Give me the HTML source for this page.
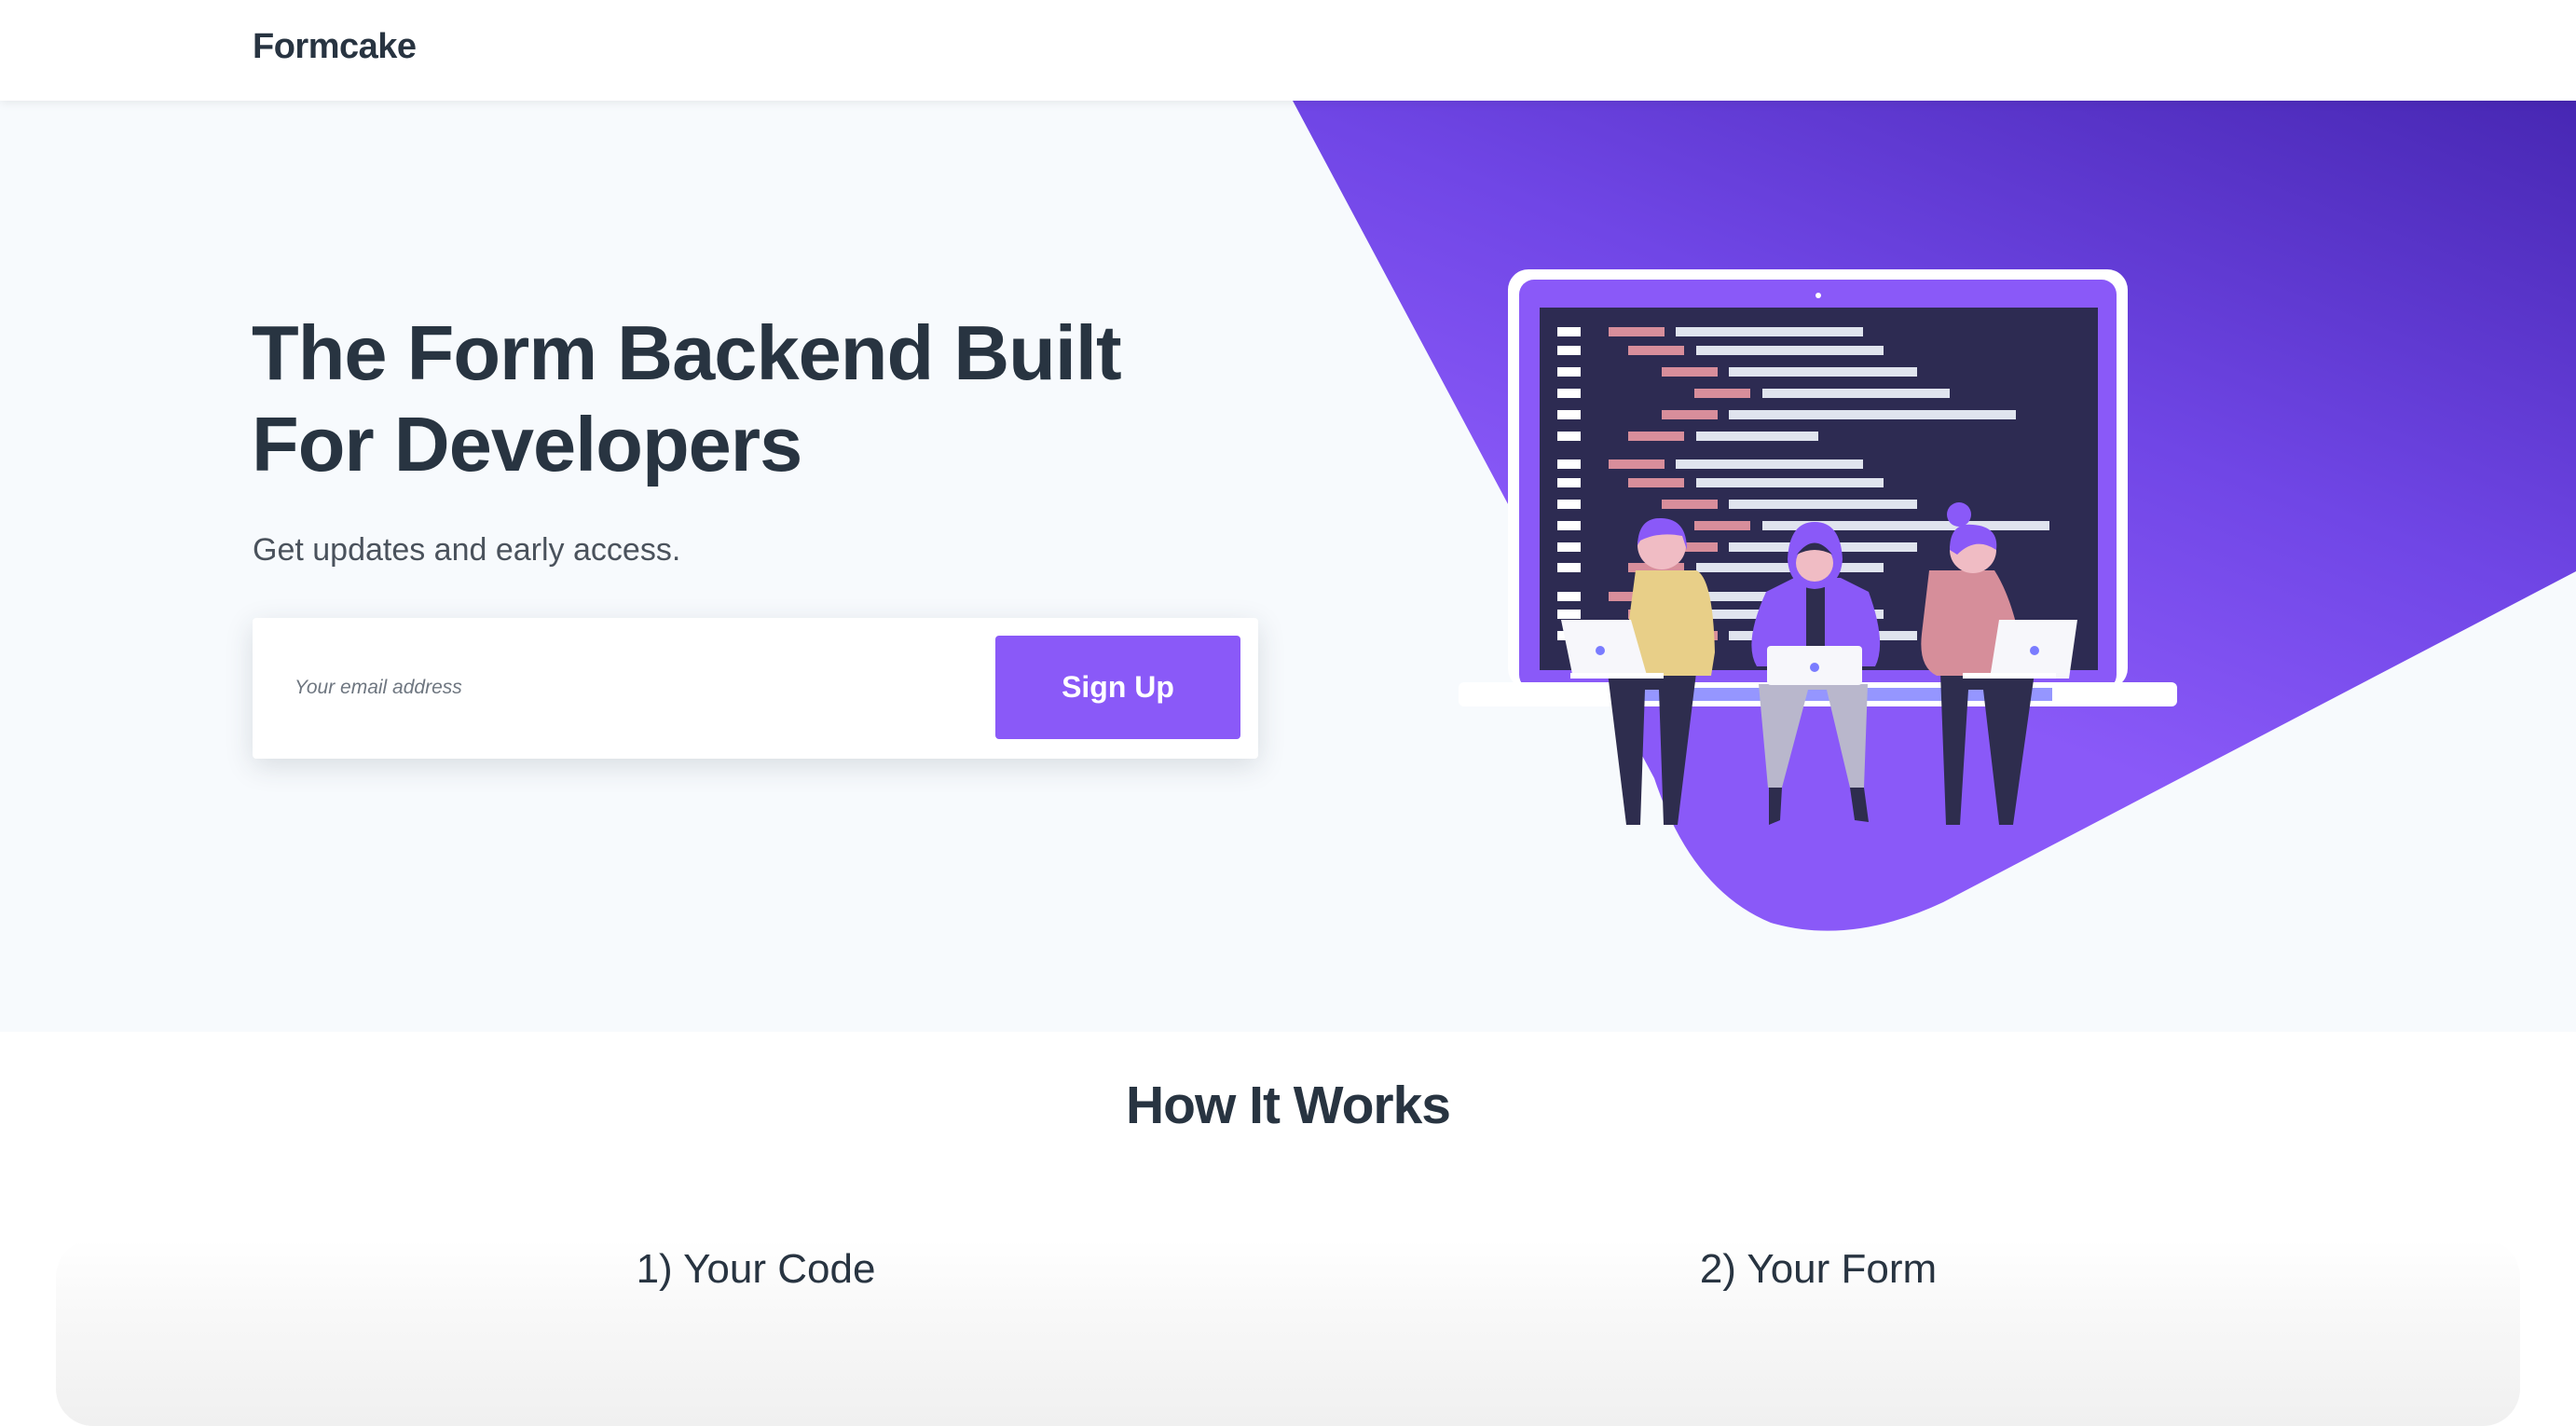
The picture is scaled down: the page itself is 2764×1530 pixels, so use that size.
<!DOCTYPE html>
<html><head><meta charset="utf-8"><style>
*{margin:0;padding:0;box-sizing:border-box}
html,body{width:2764px;height:1416px;overflow:hidden;background:#fff;font-family:"Liberation Sans",sans-serif;color:#283441}
.hero{position:absolute;left:0;top:0;width:2764px;height:1107px;background:#f7fafd;overflow:hidden}
header{position:absolute;left:0;top:0;width:2764px;height:108px;background:#fff;box-shadow:0 2px 10px rgba(0,0,0,.08);z-index:5}
.logo{position:absolute;left:271px;top:29px;font-size:38px;font-weight:bold;letter-spacing:-0.5px;color:#283441}
h1{position:absolute;left:270px;top:330px;font-size:83px;line-height:98px;font-weight:bold;letter-spacing:-1px;color:#283441;z-index:3}
.sub{position:absolute;left:271px;top:571px;font-size:34px;color:#4a525c;z-index:3}
.form{position:absolute;left:271px;top:663px;width:1079px;height:151px;background:#fff;border-radius:4px;box-shadow:0 8px 30px rgba(40,52,65,.15);z-index:3}
.ph{position:absolute;left:45px;top:63px;font-size:21px;font-style:italic;color:#6e7680}
.btn{position:absolute;left:797px;top:19px;width:263px;height:111px;background:#8a59f8;border-radius:4px;color:#fff;font-weight:bold;font-size:32px;text-align:center;line-height:111px}
svg.art{position:absolute;left:0;top:0}
.how{position:absolute;left:0;width:2764px;text-align:center;top:1153px;font-size:57px;font-weight:bold;color:#283441;letter-spacing:-1px}
.card{position:absolute;left:60px;top:1330px;width:2644px;height:200px;border-radius:40px;background:linear-gradient(rgba(255,255,255,0),#f8f8f8 40%,#f0f0f0)}
.step{position:absolute;top:1337px;font-size:44px;color:#283441;transform:translateX(-50%)}
</style></head><body>
<div class="hero">
<svg class="art" width="2764" height="1107" viewBox="0 0 2764 1107">
<defs><linearGradient id="g" x1="1" y1="0" x2="0.55" y2="0.75"><stop offset="0" stop-color="#4727b3"/><stop offset="0.6" stop-color="#7046e6"/><stop offset="1" stop-color="#8a59f8"/></linearGradient></defs>
<path d="M1387,108 L2764,108 L2764,613 L2085,968 Q1985,1015 1900,990 Q1815,955 1775,835 Z" fill="url(#g)"/>
<rect x="1618" y="289" width="665" height="450" rx="22" fill="#fff"/>
<rect x="1630" y="300" width="641" height="440" rx="16" fill="#8a59f8"/>
<rect x="1652" y="330" width="599" height="389" fill="#2d2b52"/>
<circle cx="1951" cy="317" r="3" fill="#fff"/>
<g fill="#fff">
<rect x="1671" y="351" width="25" height="10"/><rect x="1671" y="371" width="25" height="10"/><rect x="1671" y="394" width="25" height="10"/><rect x="1671" y="417" width="25" height="10"/><rect x="1671" y="440" width="25" height="10"/><rect x="1671" y="463" width="25" height="10"/><rect x="1671" y="493" width="25" height="10"/><rect x="1671" y="513" width="25" height="10"/><rect x="1671" y="536" width="25" height="10"/><rect x="1671" y="559" width="25" height="10"/><rect x="1671" y="582" width="25" height="10"/><rect x="1671" y="604" width="25" height="10"/><rect x="1671" y="635" width="25" height="10"/><rect x="1671" y="654" width="25" height="10"/><rect x="1671" y="677" width="25" height="10"/>
</g>
<g fill="#d88e9b">
<rect x="1726" y="351" width="60" height="10"/><rect x="1747" y="371" width="60" height="10"/><rect x="1783" y="394" width="60" height="10"/><rect x="1818" y="417" width="60" height="10"/><rect x="1783" y="440" width="60" height="10"/><rect x="1747" y="463" width="60" height="10"/><rect x="1726" y="493" width="60" height="10"/><rect x="1747" y="513" width="60" height="10"/><rect x="1783" y="536" width="60" height="10"/><rect x="1818" y="559" width="60" height="10"/><rect x="1783" y="582" width="60" height="10"/><rect x="1747" y="604" width="60" height="10"/><rect x="1726" y="635" width="60" height="10"/><rect x="1747" y="654" width="60" height="10"/><rect x="1783" y="677" width="60" height="10"/>
</g>
<g fill="#e0e4ee">
<rect x="1798" y="351" width="201" height="10"/><rect x="1820" y="371" width="201" height="10"/><rect x="1855" y="394" width="202" height="10"/><rect x="1891" y="417" width="201" height="10"/><rect x="1855" y="440" width="308" height="10"/><rect x="1820" y="463" width="131" height="10"/><rect x="1798" y="493" width="201" height="10"/><rect x="1820" y="513" width="201" height="10"/><rect x="1855" y="536" width="202" height="10"/><rect x="1891" y="559" width="308" height="10"/><rect x="1855" y="582" width="202" height="10"/><rect x="1820" y="604" width="201" height="10"/><rect x="1798" y="635" width="201" height="10"/><rect x="1820" y="654" width="201" height="10"/><rect x="1855" y="677" width="202" height="10"/>
</g>
<rect x="1565" y="732" width="771" height="26" rx="6" fill="#fff"/>
<rect x="1742" y="738" width="460" height="14" fill="#7a7cff" opacity=".8"/>
<path d="M1725,722 L1745,885 L1760,885 L1765,740 L1780,740 L1785,885 L1800,885 L1820,722 Z" fill="#2e2d4e"/>
<path d="M1755,612 L1820,612 Q1838,620 1840,700 L1836,725 L1740,725 Z" fill="#e8cf88"/>
<circle cx="1783" cy="585" r="26" fill="#f0bcc4"/>
<path d="M1757,585 Q1758,555 1783,556 Q1810,557 1810,590 L1805,575 Q1780,570 1760,580 Z" fill="#8a59f8"/>
<path d="M1675,665 L1750,665 L1768,728 L1688,728 Z" fill="#f7f7fb"/>
<rect x="1685" y="722" width="100" height="6" fill="#fff"/>
<circle cx="1717" cy="698" r="5" fill="#7a7cff"/>
<path d="M1887,734 L1897,845 L1912,845 L1940,740 L1960,740 L1985,845 L2000,845 L2004,734 Z" fill="#b9b7cc"/>
<path d="M1898,845 L1912,845 L1910,880 L1898,885 Z M1985,845 L2000,845 L2005,882 L1990,880 Z" fill="#2e2d4e"/>
<path d="M1885,715 Q1870,690 1895,635 L1925,620 L1975,620 L2005,635 Q2025,690 2012,715 Z" fill="#8a59f8"/>
<rect x="1938" y="630" width="20" height="85" fill="#2e2d4e"/>
<path d="M1918,600 Q1920,560 1947,560 Q1975,560 1977,600 Q1975,630 1947,632 Q1920,630 1918,600 Z" fill="#8a59f8"/>
<circle cx="1947" cy="604" r="20" fill="#f0bcc4"/>
<path d="M1928,595 Q1947,570 1966,595 Q1947,585 1928,595 Z" fill="#2e2d4e"/>
<rect x="1896" y="693" width="102" height="42" rx="4" fill="#f7f7fb"/>
<circle cx="1947" cy="716" r="5" fill="#7a7cff"/>
<path d="M2082,722 L2088,885 L2103,885 L2112,740 L2128,740 L2145,885 L2160,885 L2183,722 Z" fill="#2e2d4e"/>
<path d="M2070,612 L2140,612 Q2158,640 2168,690 L2165,725 L2078,725 Q2058,715 2062,680 Z" fill="#d68e9a"/>
<circle cx="2102" cy="552" r="13" fill="#8a59f8"/>
<circle cx="2117" cy="590" r="25" fill="#f0bcc4"/>
<path d="M2092,590 Q2092,560 2117,563 Q2145,565 2142,590 Q2120,575 2100,595 Z" fill="#8a59f8"/>
<path d="M2145,665 L2229,665 L2220,728 L2135,728 Z" fill="#f7f7fb"/>
<rect x="2106" y="722" width="100" height="6" fill="#fff"/>
<circle cx="2183" cy="698" r="5" fill="#7a7cff"/>
</svg>
<h1>The Form Backend Built<br>For Developers</h1>
<div class="sub">Get updates and early access.</div>
<div class="form"><div class="ph">Your email address</div><div class="btn">Sign Up</div></div>
</div>
<header><div class="logo">Formcake</div></header>
<div class="how">How It Works</div>
<div class="card"></div>
<div class="step" style="left:811px">1) Your Code</div>
<div class="step" style="left:1951px">2) Your Form</div>
</body></html>
